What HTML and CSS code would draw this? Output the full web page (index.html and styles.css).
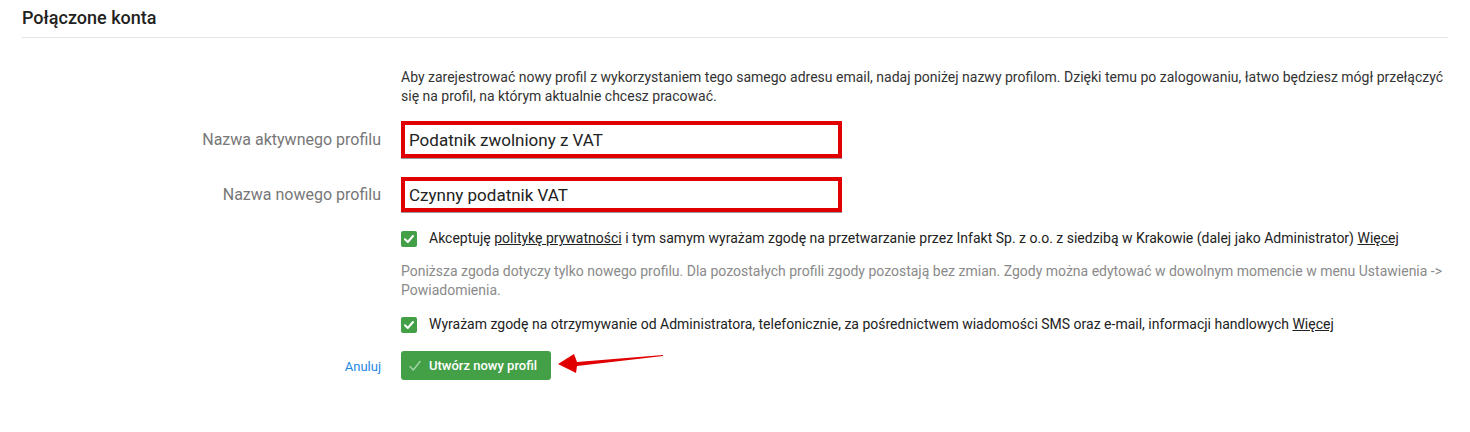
FILE: index.html
```html
<!DOCTYPE html>
<html lang="pl">
  <head>
    <meta charset="UTF-8" />
    <meta name="viewport" content="width=device-width, initial-scale=1.0" />
    <title>Połączone konta</title>
    <link rel="stylesheet" href="styles.css">
  </head>
  <body>
    <div class="page">
      <div class="section-header">
        <h2>Połączone konta</h2>
      </div>

      <form class="profile-form">
        <div class="row">
          <div class="label"></div>
          <p class="intro">
            Aby zarejestrować nowy profil z wykorzystaniem tego samego adresu email, nadaj poniżej nazwy profilom. Dzięki temu po zalogowaniu, łatwo będziesz mógł przełączyć się na profil, na którym aktualnie chcesz pracować.
          </p>
        </div>

        <div class="row row-input">
          <label class="label" for="activeName">Nazwa aktywnego profilu</label>
          <input id="activeName" class="text-input tall" type="text" value="Podatnik zwolniony z VAT">
        </div>

        <div class="row row-input second">
          <label class="label" for="newName">Nazwa nowego profilu</label>
          <input id="newName" class="text-input" type="text" value="Czynny podatnik VAT">
        </div>

        <div class="row row-check">
          <div class="label"></div>
          <div class="consent">
            <span class="checkbox">
              <svg width="12" height="12" viewBox="0 0 12 12"><path d="M2 6.3 L4.8 9 L10 3" fill="none" stroke="#fff" stroke-width="2" stroke-linecap="round" stroke-linejoin="round"/></svg>
            </span>
            <span>Akceptuję <a href="#">politykę prywatności</a> i tym samym wyrażam zgodę na przetwarzanie przez Infakt Sp. z o.o. z siedzibą w Krakowie (dalej jako Administrator) <a href="#">Więcej</a></span>
          </div>
        </div>

        <div class="row">
          <div class="label"></div>
          <p class="note">
            Poniższa zgoda dotyczy tylko nowego profilu. Dla pozostałych profili zgody pozostają bez zmian. Zgody można edytować w dowolnym momencie w menu Ustawienia -&gt; Powiadomienia.
          </p>
        </div>

        <div class="row row-check after-note">
          <div class="label"></div>
          <div class="consent">
            <span class="checkbox">
              <svg width="12" height="12" viewBox="0 0 12 12"><path d="M2 6.3 L4.8 9 L10 3" fill="none" stroke="#fff" stroke-width="2" stroke-linecap="round" stroke-linejoin="round"/></svg>
            </span>
            <span>Wyrażam zgodę na otrzymywanie od Administratora, telefonicznie, za pośrednictwem wiadomości SMS oraz e-mail, informacji handlowych <a href="#">Więcej</a></span>
          </div>
        </div>

        <div class="row row-actions">
          <div class="label"><a class="cancel" href="#">Anuluj</a></div>
          <div class="actions">
            <button type="button" class="btn-create">
              <svg width="12" height="12" viewBox="0 0 12 12"><path d="M1 6.5 L4.3 10 L11 1.5" fill="none" stroke="#a5d6a7" stroke-width="1.4" stroke-linecap="round" stroke-linejoin="round"/></svg>
              Utwórz nowy profil
            </button>
            <!-- strzałka z adnotacji -->
            <svg class="arrow" width="112" height="24" viewBox="0 0 112 24">
              <path d="M106 3 L20 10 L17 2 L1 12 L19 21 L20 14 L106 4 Z" fill="#e00000"/>
            </svg>
          </div>
        </div>
      </form>
    </div>
  </body>
</html>
```

FILE: styles.css
```css
body {
  margin: 0;
  background: #fff;
  font-family: Roboto, "Liberation Sans", sans-serif;
  color: #222;
}

.page {
  padding: 0 22px;
}

.section-header {
  border-bottom: 1px solid #e4e4e4;
  padding-top: 6px;
  height: 31px;
}

.section-header h2 {
  margin: 0;
  font-size: 18px;
  font-weight: 500;
  line-height: 24px;
  color: #222;
}

.profile-form {
  padding-top: 30px;
}

.row {
  display: flex;
  gap: 20px;
}

.label {
  flex: 0 0 359px;
  text-align: right;
  font-size: 16px;
  color: #777;
}

.intro {
  margin: 0;
  font-size: 14px;
  line-height: 19px;
  color: #333;
}

/* pola z nazwami profili */
.row-input {
  align-items: center;
  margin-top: 15px;
}

.row-input.second {
  margin-top: 19px;
}

.text-input {
  box-sizing: border-box;
  width: 441px;
  height: 35px;
  padding: 0 4px;
  border: 4px solid #e00000;
  box-shadow: 0 1px 0 #999;
  font-family: Roboto, "Liberation Sans", sans-serif;
  font-size: 17px;
  color: #222;
  outline: none;
}

.text-input.tall {
  height: 37px;
}

.row-check {
  margin-top: 17px;
  align-items: center;
}

.row-check.after-note {
  margin-top: 15px;
}

.consent {
  display: flex;
  align-items: center;
  gap: 12px;
  font-size: 14px;
  line-height: 19px;
  color: #222;
}

.consent a {
  color: #222;
  text-decoration: underline;
}

.checkbox {
  display: flex;
  align-items: center;
  justify-content: center;
  width: 16px;
  height: 16px;
  border-radius: 2px;
  background: #43a047;
}

.note {
  margin: 14px 0 0;
  font-size: 14px;
  line-height: 19px;
  color: #8a8a8a;
}

.row-actions {
  margin-top: 17px;
  align-items: center;
}

.cancel {
  font-size: 13px;
  color: #1e88e5;
  text-decoration: none;
}

.actions {
  display: flex;
  align-items: center;
}

.btn-create {
  display: flex;
  align-items: center;
  gap: 8px;
  height: 29px;
  width: 150px;
  padding: 0 8px;
  border: none;
  border-radius: 3px;
  background: #43a047;
  color: #fff;
  font-family: Roboto, "Liberation Sans", sans-serif;
  font-size: 13px;
  font-weight: 500;
  cursor: pointer;
}

.arrow {
  margin-left: 6px;
  margin-top: -4px;
}
```
